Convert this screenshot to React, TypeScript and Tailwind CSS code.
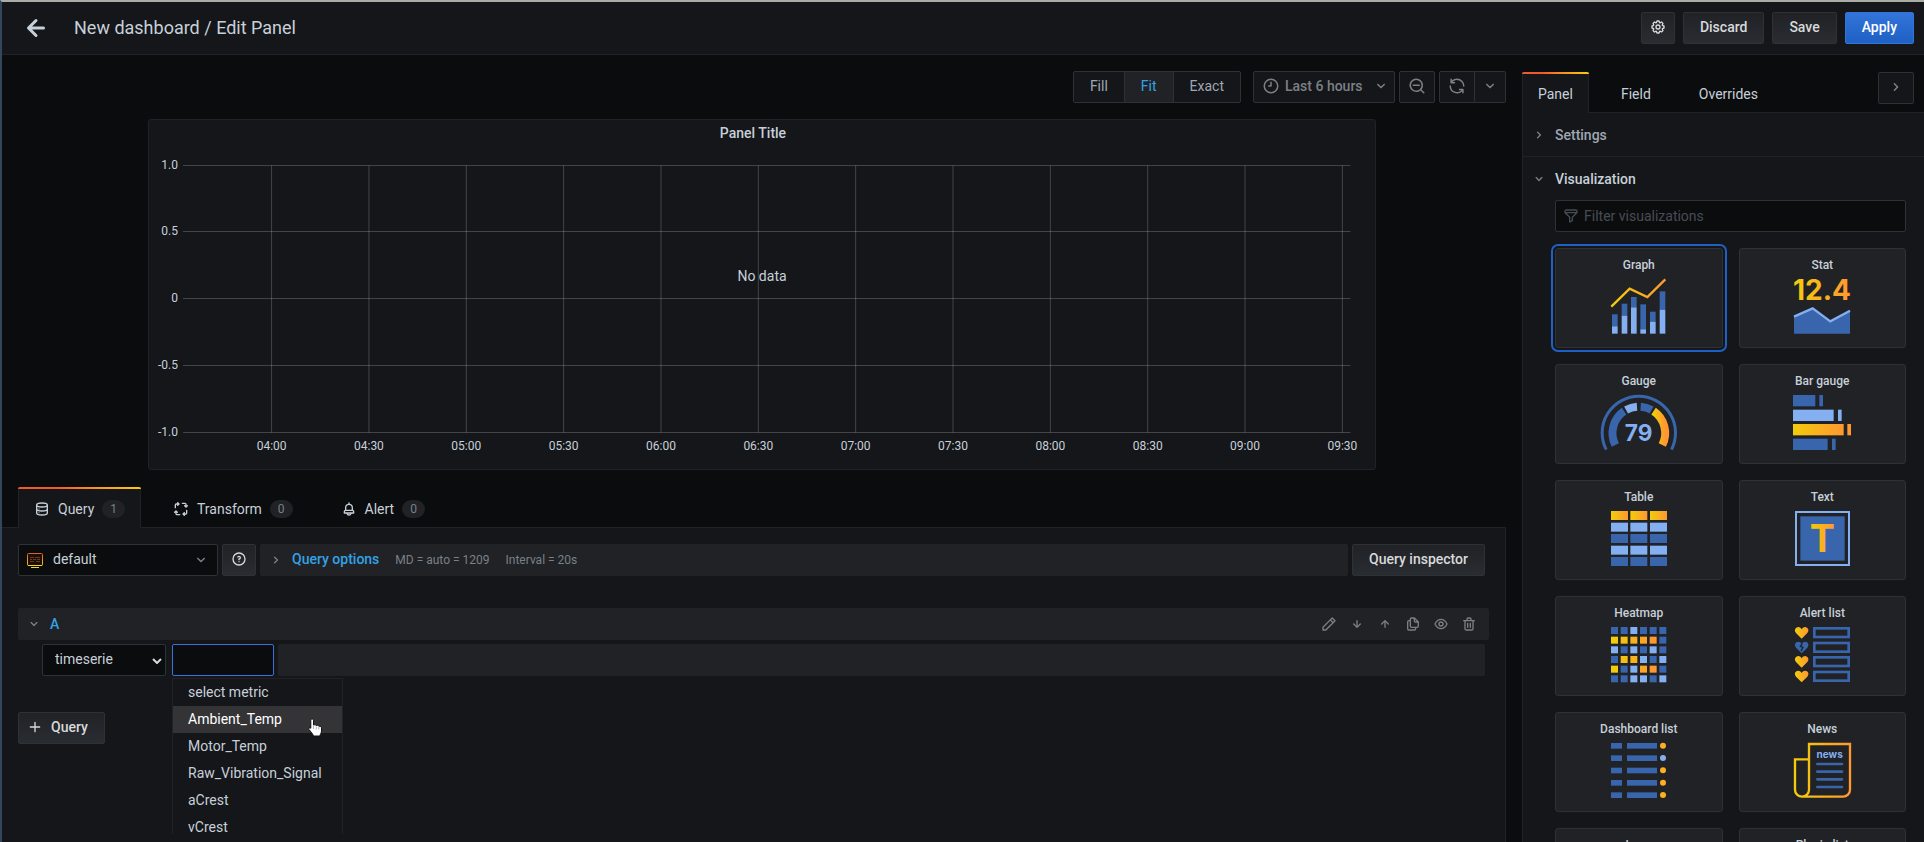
import React from "react"

interface IIcon{
    name:string,
    size?:number,
    className?:string
}

const paths:Record<string,string> = {
  arrowLeft: "M17,11H9.41l3.3-3.29a1,1,0,1,0-1.42-1.42l-5,5a1,1,0,0,0-.21.33,1,1,0,0,0,0,.76,1,1,0,0,0,.21.33l5,5a1,1,0,0,0,1.42,0,1,1,0,0,0,0-1.42L9.41,13H17a1,1,0,0,0,0-2Z",
  arrowDown: "M17.71,11.29a1,1,0,0,0-1.42,0L13,14.59V7a1,1,0,0,0-2,0v7.59l-3.29-3.3a1,1,0,0,0-1.42,1.42l5,5a1,1,0,0,0,.33.21.94.94,0,0,0,.76,0,1,1,0,0,0,.33-.21l5-5A1,1,0,0,0,17.71,11.29Z",
  angleDown: "M17,9.17a1,1,0,0,0-1.41,0L12,12.71,8.46,9.17a1,1,0,0,0-1.41,0,1,1,0,0,0,0,1.42l4.24,4.24a1,1,0,0,0,1.42,0L17,10.59A1,1,0,0,0,17,9.17Z",
  angleRight: "M14.83,11.29,10.59,7.05a1,1,0,0,0-1.42,0,1,1,0,0,0,0,1.41L12.71,12,9.17,15.54a1,1,0,0,0,0,1.41,1,1,0,0,0,.71.29,1,1,0,0,0,.71-.29l4.24-4.24A1,1,0,0,0,14.83,11.29Z",
  clock: "M12,2A10,10,0,1,0,22,12,10,10,0,0,0,12,2Zm0,18a8,8,0,1,1,8-8A8,8,0,0,1,12,20ZM12,6a1,1,0,0,0-1,1v4H9a1,1,0,0,0,0,2h3a1,1,0,0,0,1-1V7A1,1,0,0,0,12,6Z",
  searchMinus: "M21.71,20.29,18,16.61A9,9,0,1,0,16.61,18l3.68,3.68a1,1,0,0,0,1.42,0A1,1,0,0,0,21.71,20.29ZM11,18a7,7,0,1,1,7-7A7,7,0,0,1,11,18Zm4-8H7a1,1,0,0,0,0,2h8a1,1,0,0,0,0-2Z",
  sync: "M19.91,15.51H15.38a1,1,0,0,0,0,2h2.4A8,8,0,0,1,4,12a1,1,0,0,0-2,0,10,10,0,0,0,16.88,7.23V21a1,1,0,0,0,2,0V16.5A1,1,0,0,0,19.91,15.51ZM12,2A10,10,0,0,0,5.12,4.77V3a1,1,0,0,0-2,0V7.5a1,1,0,0,0,1,1h4.5a1,1,0,0,0,0-2H6.22A8,8,0,0,1,20,12a1,1,0,0,0,2,0A10,10,0,0,0,12,2Z",
  cog: "M21.32,9.55l-1.89-.63.89-1.78A1,1,0,0,0,20.13,6L18,3.87a1,1,0,0,0-1.15-.19l-1.78.89-.63-1.89A1,1,0,0,0,13.5,2h-3a1,1,0,0,0-.95.68L8.92,4.57,7.14,3.68A1,1,0,0,0,6,3.87L3.87,6a1,1,0,0,0-.19,1.15l.89,1.78-1.89.63A1,1,0,0,0,2,10.5v3a1,1,0,0,0,.68.95l1.89.63-.89,1.78A1,1,0,0,0,3.87,18L6,20.13a1,1,0,0,0,1.15.19l1.78-.89.63,1.89a1,1,0,0,0,.95.68h3a1,1,0,0,0,.95-.68l.63-1.89,1.78.89A1,1,0,0,0,18,20.13L20.13,18a1,1,0,0,0,.19-1.15l-.89-1.78,1.89-.63A1,1,0,0,0,22,13.5v-3A1,1,0,0,0,21.32,9.55ZM20,12.78l-1.2.4A2,2,0,0,0,17.64,16l.57,1.14-1.1,1.1L16,17.64a2,2,0,0,0-2.79,1.16l-.4,1.2H11.22l-.4-1.2A2,2,0,0,0,8,17.64l-1.14.57-1.1-1.1L6.36,16A2,2,0,0,0,5.2,13.18L4,12.78V11.22l1.2-.4A2,2,0,0,0,6.36,8L5.79,6.89l1.1-1.1L8,6.36A2,2,0,0,0,10.82,5.2l.4-1.2h1.56l.4,1.2A2,2,0,0,0,16,6.36l1.14-.57,1.1,1.1L17.64,8a2,2,0,0,0,1.16,2.79l1.2.4ZM12,8a4,4,0,1,0,4,4A4,4,0,0,0,12,8Zm0,6a2,2,0,1,1,2-2A2,2,0,0,1,12,14Z",
  bell: "M18,13.18V10a6,6,0,0,0-5-5.91V3a1,1,0,0,0-2,0V4.09A6,6,0,0,0,6,10v3.18A3,3,0,0,0,4,16v2a1,1,0,0,0,1,1H8.14a4,4,0,0,0,7.72,0H19a1,1,0,0,0,1-1V16A3,3,0,0,0,18,13.18ZM8,10a4,4,0,0,1,8,0v3H8Zm4,10a2,2,0,0,1-1.72-1h3.44A2,2,0,0,1,12,20Zm6-3H6V16a1,1,0,0,1,1-1H17a1,1,0,0,1,1,1Z",
  question: "M11.29,15.29a1.58,1.58,0,0,0-.12.15.76.76,0,0,0-.09.18.64.64,0,0,0-.06.18,1.36,1.36,0,0,0,0,.2.84.84,0,0,0,.08.38.9.9,0,0,0,.54.54.94.94,0,0,0,.76,0,.9.9,0,0,0,.54-.54A1,1,0,0,0,13,16a1,1,0,0,0-.29-.71A1,1,0,0,0,11.29,15.29ZM12,2A10,10,0,1,0,22,12,10,10,0,0,0,12,2Zm0,18a8,8,0,1,1,8-8A8,8,0,0,1,12,20ZM12,7A3,3,0,0,0,9.4,8.5a1,1,0,1,0,1.73,1A1,1,0,0,1,12,9a1,1,0,0,1,0,2,1,1,0,0,0-1,1v1a1,1,0,0,0,2,0v-.18A3,3,0,0,0,12,7Z",
  pen: "M22,7.24a1,1,0,0,0-.29-.71L17.47,2.29A1,1,0,0,0,16.76,2a1,1,0,0,0-.71.29L13.22,5.12h0L2.29,16.05a1,1,0,0,0-.29.71V21a1,1,0,0,0,1,1H7.24A1,1,0,0,0,8,21.71L18.87,10.78h0L21.71,8a1.19,1.19,0,0,0,.22-.33,1,1,0,0,0,0-.24.7.7,0,0,0,0-.14ZM6.83,20H4V17.17l9.93-9.93,2.83,2.83ZM18.17,8.66,15.34,5.83l1.42-1.41,2.82,2.82Z",
  copy: "M21,8.94a1.31,1.31,0,0,0-.06-.27l0-.09a1.07,1.07,0,0,0-.19-.28h0l-6-6h0a1.07,1.07,0,0,0-.28-.19.32.32,0,0,0-.09,0A.88.88,0,0,0,14.05,2H10A3,3,0,0,0,7,5V6H6A3,3,0,0,0,3,9V19a3,3,0,0,0,3,3h8a3,3,0,0,0,3-3V18h1a3,3,0,0,0,3-3V9S21,9,21,8.94ZM15,5.41,17.59,8H16a1,1,0,0,1-1-1ZM15,19a1,1,0,0,1-1,1H6a1,1,0,0,1-1-1V9A1,1,0,0,1,6,8H7v7a3,3,0,0,0,3,3h5Zm4-4a1,1,0,0,1-1,1H10a1,1,0,0,1-1-1V5a1,1,0,0,1,1-1h3V7a3,3,0,0,0,3,3h3Z",
  eye: "M21.92,11.6C19.9,6.91,16.1,4,12,4S4.1,6.91,2.08,11.6a1,1,0,0,0,0,.8C4.1,17.09,7.9,20,12,20s7.9-2.91,9.92-7.6A1,1,0,0,0,21.92,11.6ZM12,18c-3.17,0-6.17-2.29-7.9-6C5.83,8.29,8.83,6,12,6s6.17,2.29,7.9,6C18.17,15.71,15.17,18,12,18ZM12,8a4,4,0,1,0,4,4A4,4,0,0,0,12,8Zm0,6a2,2,0,1,1,2-2A2,2,0,0,1,12,14Z",
  trash: "M10,18a1,1,0,0,0,1-1V11a1,1,0,0,0-2,0v6A1,1,0,0,0,10,18ZM20,6H16V5a3,3,0,0,0-3-3H11A3,3,0,0,0,8,5V6H4A1,1,0,0,0,4,8H5V19a3,3,0,0,0,3,3h8a3,3,0,0,0,3-3V8h1a1,1,0,0,0,0-2ZM10,5a1,1,0,0,1,1-1h2a1,1,0,0,1,1,1V6H10Zm7,14a1,1,0,0,1-1,1H8a1,1,0,0,1-1-1V8H17Zm-3-1a1,1,0,0,0,1-1V11a1,1,0,0,0-2,0v6A1,1,0,0,0,14,18Z",
  plus: "M19,11H13V5a1,1,0,0,0-2,0v6H5a1,1,0,0,0,0,2h6v6a1,1,0,0,0,2,0V13h6a1,1,0,0,0,0-2Z",
  filter: "M19,2H5A3,3,0,0,0,2,5V6.17a3,3,0,0,0,.25,1.2l0,.06a2.81,2.81,0,0,0,.59.86L9,14.41V21a1,1,0,0,0,.47.85A1,1,0,0,0,10,22a1,1,0,0,0,.45-.11l4-2A1,1,0,0,0,15,19V14.41l6.12-6.12a2.81,2.81,0,0,0,.59-.86l0-.06A3,3,0,0,0,22,6.17V5A3,3,0,0,0,19,2ZM13.29,13.29A1,1,0,0,0,13,14v4.38l-2,1V14a1,1,0,0,0-.29-.71L5.41,8H18.59ZM20,6H4V5A1,1,0,0,1,5,4H19a1,1,0,0,1,1,1Z",
}

const Icon:React.FC<IIcon> = ({name,size=16,className=""}) => {
  return (
    <svg width={size} height={size} viewBox="0 0 24 24" fill="currentColor" aria-hidden="true" className={`shrink-0 ${className}`}>
      <path d={paths[name]} />
    </svg>
  )
}

const DatabaseIcon = () => (
  <svg width="16" height="16" viewBox="0 0 24 24" fill="none" stroke="currentColor" strokeWidth="2" aria-hidden="true" className="shrink-0">
    <path d="M4 6c0-2 3.500-3 8-3s8 1 8 3v12c0 2-3.500 3-8 3s-8-1-8-3zM4 6c0 2 3.500 3 8 3s8-1 8-3M4 12c0 2 3.500 3 8 3s8-1 8-3" />
    <path d="M7 12h1M7 17.500h1" />
  </svg>
)

const ProcessIcon = () => (
  <svg width="16" height="16" viewBox="0 0 24 24" fill="none" stroke="currentColor" strokeWidth="2" strokeLinecap="round" strokeLinejoin="round" aria-hidden="true" className="shrink-0">
    {[0,90,180,270].map((a) =>
      <path key={a} transform={`rotate(${a} 12 12)`} d="M3.500 10V6A1.500 1.500 0 0 1 5 4.500H8.500M7 2.500 9 4.500 7 6.500" />
    )}
  </svg>
)

const SourceIcon = () => (
  <svg width="16" height="16" viewBox="0 0 16 16" aria-hidden="true" className="shrink-0">
    <defs>
      <linearGradient id="src" x1="0" y1="0" x2="0" y2="1">
        <stop offset="0" stopColor="#e0622a" />
        <stop offset="1" stopColor="#f5c518" />
      </linearGradient>
    </defs>
    <rect x="0.500" y="1.500" width="15" height="12" rx="1" fill="#1c0f0a" stroke="url(#src)" />
    <path d="M3 5.500h4M8 5.500h5M3 7.500h2M6 7.500h3M10 7.500h3M3 9.500h4M9 9.500h4" stroke="#6b3c18" />
    <path d="M1 13.500h14M4 15.500h8" stroke="#f9d423" />
  </svg>
)

const DARK = "#3865ab"
const LIGHT = "#84aff1"
const WARM = ["#f2cc0c","#f5bf14","#f8b21d","#fca525","#ff9830"]

const arc = (r:number,from:number,to:number) => {
  const pt = (a:number) => {
    const rad = (a*Math.PI)/180
    return `${(83.5+r*Math.sin(rad)).toFixed(1)} ${(114-r*Math.cos(rad)).toFixed(1)}`
  }
  return `M${pt(from)}A${r} ${r} 0 ${to-from>180 ? 1 : 0} 1 ${pt(to)}`
}

const heat = ["ddlddd","oooood","ldldld","dooldl","odlood","ddlldl"]
const bars = [[3,106,142],[32,74,110],[60,54,85],[88,76,151],[117,98,128],[146,37,92]]
const gaugeBars = [[0,61,73,DARK],[44,116,129,LIGHT],[87,146,157,"url(#warm)"],[131,98,111,DARK]] as [number,number,number,string][]

const drawings:Record<string,React.ReactNode> = {
  "Graph": <>
    {bars.map(([x,top,split]) =>
      <g key={x}>
        <rect x={x} y={top} width="17" height={split-top} fill={DARK} />
        <rect x={x} y={split} width="17" height={164-split} fill={LIGHT} />
      </g>
    )}
    <path d="M1 83 56 29l53 25 54-53" fill="none" stroke="url(#warmUser)" strokeWidth="7" />
  </>,
  "Stat": <>
    <text x="81" y="62" textAnchor="middle" fontSize="84" fontWeight="700" fontFamily="Inter, sans-serif" fill="url(#warmUser)">12.4</text>
    <path d="M-3 113 53 88l53 39 59-32v69H-3z" fill={DARK} />
    <path d="M-3 113 53 88l53 39 59-32" fill="none" stroke={LIGHT} strokeWidth="7" />
  </>,
  "Gauge": <>
    <path d={arc(110,-117,117)} fill="none" stroke={DARK} strokeWidth="9" />
    <g fill="none" strokeWidth="24">
      <path d={arc(79,-117,-34)} stroke={DARK} />
      <path d={arc(79,-29,-4)} stroke={LIGHT} />
      <path d={arc(79,4,29)} stroke={DARK} />
      <path d={arc(79,34,117)} stroke="url(#warm)" />
    </g>
    <text x="83" y="138" textAnchor="middle" fontSize="68" fontWeight="700" fontFamily="Inter, sans-serif" fill={LIGHT}>79</text>
  </>,
  "Bar gauge": <>
    {gaugeBars.map(([y,end,tick,fill]) =>
      <g key={y}>
        <rect x="-6" y={y} width={end+6} height="34" fill={fill} />
        <rect x={tick} y={y} width="11" height="34" fill={y===87 ? "#ff9830" : fill} />
      </g>
    )}
  </>,
  "Table": <>
    {[0,35,69,104,138].map((y,r) => [0,58,117].map((x) =>
      <rect key={`${x}-${y}`} x={x} y={y} width="51" height="27" fill={r===0 ? "url(#warm)" : r%2 ? LIGHT : DARK} />
    ))}
  </>,
  "Text": <>
    <rect x="3" y="3" width="159" height="159" fill="none" stroke={LIGHT} strokeWidth="6" />
    <rect x="16" y="16" width="133" height="133" fill={DARK} />
    <text x="82" y="124" textAnchor="middle" fontSize="113" fontWeight="700" fontFamily="Inter, sans-serif" fill="url(#warm)">T</text>
  </>,
  "Heatmap": <>
    {heat.map((row,y) => row.split("").map((c,x) =>
      <rect key={`${x}-${y}`} x={x*29} y={y*29} width="21" height="21" fill={c==="d" ? DARK : c==="l" ? LIGHT : WARM[x]} />
    ))}
  </>,
  "Alert list": <>
    {[0,44,87,131].map((y,i) =>
      <g key={y} transform={`translate(0 ${y})`}>
        <path d="M20 35 3 18C-2 12-1 5 4 2c6-4 12-1 16 5 4-6 10-9 16-5 5 3 6 10 1 16z" fill={i===1 ? DARK : "url(#warm)"} />
        {i===1 && <path d="m22 5-6 9 8 3-6 11" fill="none" stroke="#202226" strokeWidth="4" />}
        <rect x="58" y="4" width="103" height="26" fill="none" stroke={DARK} strokeWidth="8" />
      </g>
    )}
  </>,
  "Dashboard list": <>
    {[0,37,74,111,148].map((y,i) =>
      <g key={y}>
        <rect x="0" y={y} width="33" height="17" fill={DARK} />
        <rect x="48" y={y} width="90" height="17" fill={DARK} />
        <circle cx="156" cy={y+8} r="9" fill={i===1 ? LIGHT : "#fcaf22"} />
      </g>
    )}
  </>,
  "News": <>
    <path d="M42 140V3h123v137a21 21 0 0 1-21 21H20M42 49H0v91a21 21 0 0 0 42 0" fill="none" stroke="url(#warmUser)" strokeWidth="7" />
    <text x="104" y="44" textAnchor="middle" fontSize="30" fontWeight="700" fontFamily="Inter, sans-serif" fill={LIGHT}>news</text>
    <path d="M67 63h74M67 86h74M67 109h74M67 132h74" stroke={DARK} strokeWidth="8" strokeLinecap="round" />
  </>,
}

const visualizations = ["Graph","Stat","Gauge","Bar gauge","Table","Text","Heatmap","Alert list","Dashboard list","News","Logs","Plugin list"]

interface ICard{
    title:string,
    selected:boolean
}

const VizCard:React.FC<ICard> = ({title,selected}) => {
  return (
    <button className={`flex h-[100px] flex-col items-center rounded-[3px] border border-[#2c3235] bg-[#202226] pt-[7px] ${selected ? "outline-2 outline-offset-2 outline-[#1f60c4]" : ""}`}>
      <span className="text-xs font-medium leading-[18px] text-[#c7d0d9]">{title}</span>
      <svg width="55" height="55" viewBox="0 0 165 165" aria-hidden="true" className="mt-[5px] overflow-visible">{drawings[title]}</svg>
    </button>
  )
}

const secondary = "flex h-8 shrink-0 items-center justify-center rounded-[2px] border border-[#2c3235] bg-linear-to-b from-[#202226] to-[#292c31] pb-[2px] text-sm font-medium text-[#d8d9da]"
const toolbarButton = "flex h-8 items-center justify-center border border-[#2c3235] bg-[#141619] pb-[2px] text-[#7b8087]"

const times = ["04:00","04:30","05:00","05:30","06:00","06:30","07:00","07:30","08:00","08:30","09:00","09:30"]
const levels = ["1.0","0.5","0","-0.5","-1.0"]

const Chart = () => {
  const x = (i:number) => `${10+i*7.94}%`
  const y = (i:number) => Math.floor(19+i*66.75)+0.5
  return (
    <svg width="100%" height="323" className="block text-xs" role="img" aria-label="Panel Title, no data">
      <g stroke="#ffffff" strokeOpacity="0.2">
        {levels.map((l,i) => <line key={l} x1="34" x2="98%" y1={y(i)} y2={y(i)} />)}
        {times.map((t,i) => <line key={t} x1={x(i)} x2={x(i)} y1={y(0)} y2={y(4)} />)}
      </g>
      <g fill="#c7d0d9">
        {levels.map((l,i) => <text key={l} x="29" y={Math.floor(y(i))+4} textAnchor="end">{l}</text>)}
        {times.map((t,i) => <text key={t} x={x(i)} y="304" textAnchor="middle">{t}</text>)}
        <text x="50%" y="135" textAnchor="middle" className="text-sm">No data</text>
      </g>
    </svg>
  )
}

interface ITab{
    label:string,
    count?:number,
    icon?:React.ReactNode,
    active?:boolean
}

const Tab:React.FC<ITab> = ({label,count,icon,active}) => {
  return (
    <button role="tab" aria-selected={!!active} className={`relative -mb-px flex h-[41px] items-center gap-2 border-x px-[15px] pt-[2px] text-sm text-[#c7d0d9] ${active ? "border-[#202226] bg-[#141619]" : "border-transparent"}`}>
      {active && <span className="absolute -inset-x-px top-0 h-[2px] rounded-t-[2px] bg-linear-to-r from-[#f05a28] from-30% to-[#fbca0a] to-99%" />}
      {icon}
      <span>{label}</span>
      {count !== undefined && <span className="rounded-full bg-[#202226] px-2 text-xs leading-[18px] text-[#7b8087]">{count}</span>}
    </button>
  )
}

const Header = () => {
  return (
    <header className="flex h-[53px] shrink-0 items-center border-b border-[#202226] bg-[#141619] pr-[10px] pl-4">
      <button aria-label="Go back" className="text-[#c7d0d9]"><Icon name="arrowLeft" size={36} /></button>
      <h1 className="ml-5 flex-1 text-lg leading-6 text-[#c7d0d9]">New dashboard / Edit Panel</h1>
      <div className="flex gap-2">
        <button aria-label="Dashboard settings" className={`${secondary} w-[34px]`}><Icon name="cog" /></button>
        <button className={`${secondary} px-4`}>Discard</button>
        <button className={`${secondary} px-4`}>Save</button>
        <button className="flex h-8 items-center rounded-[2px] border border-[#3274d9] bg-linear-to-b from-[#3274d9] to-[#1f60c4] px-4 pb-[2px] text-sm font-medium text-white">Apply</button>
      </div>
    </header>
  )
}

const Toolbar = () => {
  return (
    <div className="flex justify-end gap-1">
      <div className="mr-2 flex overflow-hidden rounded-[2px] border border-[#2c3235] text-sm text-[#9fa7b3]">
        <button className="h-[30px] bg-[#141619] px-4 pb-[2px]">Fill</button>
        <button className="h-[30px] border-x border-[#2c3235] bg-[#202226] px-4 pb-[2px] text-[#33a2e5]">Fit</button>
        <button className="h-[30px] bg-[#141619] px-4 pb-[2px]">Exact</button>
      </div>
      <button className={`${toolbarButton} w-[142px] rounded-[2px] pr-1 pl-2 text-sm font-medium`}>
        <Icon name="clock" size={18} />
        <span className="ml-[5px] flex-1 text-left">Last 6 hours</span>
        <Icon name="angleDown" size={18} />
      </button>
      <button aria-label="Zoom out" className={`${toolbarButton} w-9 rounded-[2px]`}><Icon name="searchMinus" size={18} /></button>
      <div className="flex">
        <button aria-label="Refresh" className={`${toolbarButton} w-9 rounded-l-[2px]`}><Icon name="sync" size={18} /></button>
        <button aria-label="Refresh interval" className={`${toolbarButton} w-[31px] rounded-r-[2px] border-l-0`}><Icon name="angleDown" size={18} /></button>
      </div>
    </div>
  )
}

const metrics = ["select metric","Ambient_Temp","Motor_Temp","Raw_Vibration_Signal","aCrest","vCrest"]

const QueryRow = () => {
  return (
    <div>
      <div className="mr-4 flex h-8 items-center rounded-[2px] bg-[#202226] pr-3 pl-2">
        <Icon name="angleDown" className="text-[#7b8087]" />
        <span className="ml-2 flex-1 text-sm font-medium text-[#33a2e5]">A</span>
        <div className="flex gap-3 text-[#7b8087]">
          <button aria-label="Edit"><Icon name="pen" /></button>
          <button aria-label="Move down"><Icon name="arrowDown" /></button>
          <button aria-label="Move up"><Icon name="arrowDown" className="rotate-180" /></button>
          <button aria-label="Duplicate"><Icon name="copy" /></button>
          <button aria-label="Disable"><Icon name="eye" /></button>
          <button aria-label="Remove"><Icon name="trash" /></button>
        </div>
      </div>
      <div className="mt-1 mr-5 ml-6 flex">
        <div className="relative w-[124px]">
          <select aria-label="Format" className="h-8 w-full appearance-none rounded-[2px] border border-[#2c3235] bg-[#0b0c0e] pb-[2px] pl-3 text-sm text-[#c7d0d9]">
            <option>timeserie</option>
          </select>
          <svg width="10" height="6" viewBox="0 0 10 6" fill="none" stroke="#d8d9da" strokeWidth="2" aria-hidden="true" className="pointer-events-none absolute top-[14px] right-1">
            <path d="m1 1 4 4 4-4" />
          </svg>
        </div>
        <div className="relative ml-[6px] w-[102px]">
          <input type="text" aria-label="Metric" className="block h-8 w-full rounded-[2px] border border-[#3871dc] bg-[#0b0c0e] px-2 text-sm text-[#c7d0d9] outline-none" />
          <ul className="absolute top-[34px] left-0 z-10 h-[156px] w-[171px] overflow-hidden border border-b-0 border-[#202226] bg-[#141619] text-sm text-[#c7d0d9]">
            {metrics.map((m,i) =>
              <li key={m} className={`flex h-[27px] items-center px-[15px] pb-[2px] ${i===1 ? "bg-[#343436] text-white" : ""}`}>{m}</li>
            )}
          </ul>
          <svg width="15" height="19" viewBox="0 0 15 19" aria-hidden="true" className="absolute top-[74px] left-[136px] z-20">
            <path d="M4 1c1 0 1.500.7 1.500 1.500V7c2-.5 2.500 0 2.800.5C9.800 7 10.500 7.500 10.800 8.200 12.500 8 13.500 8.700 13.500 10v3c0 2-1.500 3-1.500 5H5.500C5 16 2.500 13.500 1 11.500c-.8-1.200.8-2.200 1.800-1.200V2.500C2.800 1.700 3.200 1 4 1z" fill="#fff" stroke="#111" />
            <path d="M5.500 8v3M8.300 8.500v3M10.800 9v2.500" stroke="#777" strokeWidth="0.600" />
          </svg>
        </div>
        <div className="ml-1 h-8 flex-1 rounded-[2px] bg-[#202226]" />
      </div>
    </div>
  )
}

const QueryEditor = () => {
  return (
    <section className="mr-4 flex-1 border-r border-[#202226] bg-[#141619] pt-4 pl-4">
      <div className="mr-5 flex gap-1">
        <div className="relative w-[200px] shrink-0 text-[#c7d0d9]">
          <select aria-label="Data source" className="h-8 w-full appearance-none rounded-[2px] border border-[#2c3235] bg-[#0b0c0e] pb-[2px] pl-[34px] text-sm">
            <option>default</option>
          </select>
          <span className="pointer-events-none absolute inset-y-0 left-[9px] flex items-center"><SourceIcon /></span>
          <span className="pointer-events-none absolute inset-y-0 right-2 flex items-center text-[#7b8087]"><Icon name="angleDown" size={18} /></span>
        </div>
        <button aria-label="Data source help" className={`${secondary} w-[34px]`}><Icon name="question" /></button>
        <button className="flex h-8 min-w-0 flex-1 items-center rounded-[2px] bg-[#202226] pl-2 text-xs text-[#7b8087]">
          <Icon name="angleRight" />
          <span className="ml-2 pb-[2px] text-sm font-medium text-[#33a2e5]">Query options</span>
          <span className="ml-4">MD = auto = 1209</span>
          <span className="ml-4">Interval = 20s</span>
        </button>
        <button className={`${secondary} px-4`}>Query inspector</button>
      </div>
      <div className="mt-8"><QueryRow /></div>
      <button className={`${secondary} mt-9 w-[87px] gap-2 pr-2`}>
        <Icon name="plus" />
        Query
      </button>
    </section>
  )
}

const OptionsPane = () => {
  return (
    <aside className="flex w-[402px] shrink-0 flex-col pt-[17px]">
      <div className="flex border-b border-[#202226]" role="tablist">
        <div className="flex flex-1 gap-4">
          <Tab label="Panel" active />
          <Tab label="Field" />
          <Tab label="Overrides" />
        </div>
        <button aria-label="Collapse options" className={`${toolbarButton} mr-[10px] w-9 rounded-[2px]`}><Icon name="angleRight" size={18} /></button>
      </div>
      <div className="flex-1 border-l border-[#202226] bg-[#141619]">
        <button className="flex h-11 w-full items-center border-b border-[#202226] pl-2 text-sm font-medium text-[#9fa7b3]">
          <Icon name="angleRight" className="text-[#7b8087]" />
          <span className="ml-2">Settings</span>
        </button>
        <button className="flex h-[43px] w-full items-center pl-2 text-sm font-medium text-[#c7d0d9]">
          <Icon name="angleDown" className="text-[#7b8087]" />
          <span className="ml-2">Visualization</span>
        </button>
        <div className="mr-[18px] ml-8">
          <div className="relative">
            <Icon name="filter" className="absolute top-2 left-2 text-[#464c54]" />
            <input type="text" aria-label="Filter visualizations" placeholder="Filter visualizations" className="block h-8 w-full rounded-[2px] border border-[#2c3235] bg-[#0b0c0e] pl-7 text-sm text-[#c7d0d9] placeholder:text-[#464c54]" />
          </div>
          <div className="mt-4 grid grid-cols-2 gap-4">
            {visualizations.map((v) => <VizCard key={v} title={v} selected={v==="Graph"} />)}
          </div>
        </div>
      </div>
    </aside>
  )
}

const App = () => {
  return (
    <div className="flex h-screen flex-col overflow-hidden border-t-2 border-l-2 border-t-[#a9ada6] border-l-[#34465c] bg-[#0b0c0e] font-[Roboto,sans-serif] text-[#c7d0d9]">
      {/* shared gradients of the visualization drawings */}
      <svg width="0" height="0" className="absolute" aria-hidden="true">
        <defs>
          <linearGradient id="warm">
            <stop offset="0" stopColor="#f2cc0c" />
            <stop offset="1" stopColor="#ff9830" />
          </linearGradient>
          <linearGradient id="warmUser" gradientUnits="userSpaceOnUse" x1="0" y1="0" x2="165" y2="0">
            <stop offset="0" stopColor="#f2cc0c" />
            <stop offset="1" stopColor="#ff9830" />
          </linearGradient>
        </defs>
      </svg>
      <Header />
      <div className="flex min-h-0 flex-1">
        <main className="flex min-w-0 flex-1 flex-col pt-4">
          <div className="px-4">
            <Toolbar />
            <section className="mx-[130px] mt-4 h-[351px] rounded-[3px] border border-[#202226] bg-[#141619]">
              <h2 className="h-[26px] pr-[18px] text-center text-sm font-medium leading-[26px]">Panel Title</h2>
              <Chart />
            </section>
          </div>
          <div role="tablist" className="mt-[17px] mr-4 flex gap-4 border-b border-[#202226] pl-4">
            <Tab label="Query" count={1} icon={<DatabaseIcon />} active />
            <Tab label="Transform" count={0} icon={<ProcessIcon />} />
            <Tab label="Alert" count={0} icon={<Icon name="bell" />} />
          </div>
          <QueryEditor />
        </main>
        <OptionsPane />
      </div>
    </div>
  )
}

export default App
